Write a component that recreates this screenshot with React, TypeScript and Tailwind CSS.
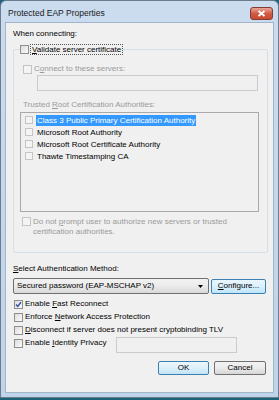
import React from 'react';

function Box({ checked = false, disabled = false, size = 9 }: { checked?: boolean; disabled?: boolean; size?: number }) {
  return (
    <span
      className={`flex shrink-0 items-center justify-center border ${disabled ? 'border-[#c4c4c4] bg-[#f4f4f4]' : 'border-[#8e8f8f] bg-linear-to-br from-[#dcdcdc] to-[#fbfbfb]'}`}
      style={{ width: size, height: size }}
    >
      {checked && (
        <svg width="7" height="7" viewBox="0 0 7 7">
          <path d="M1 3.6 L2.8 5.5 L6 1.2" stroke="#2a4f9a" strokeWidth="1.4" fill="none" />
        </svg>
      )}
    </span>
  );
}

function U({ children }: { children: React.ReactNode }) {
  return <span className="underline underline-offset-[1px]">{children}</span>;
}

function CheckRow({ label, checked = false, className = '' }: { label: React.ReactNode; checked?: boolean; className?: string }) {
  return (
    <div className={`flex h-[10px] items-center ${className}`}>
      <span className="ml-[1px]">
        <Box checked={checked} />
      </span>
      <span className="ml-[2px] whitespace-nowrap">{label}</span>
    </div>
  );
}

export default function App() {
  const cas = [
    'Class 3 Public Primary Certification Authority',
    'Microsoft Root Authority',
    'Microsoft Root Certificate Authority',
    'Thawte Timestamping CA',
  ];

  return (
    <div className="h-[400px] w-[279px] bg-[#1b6378] font-['Liberation_Sans',Arial,sans-serif] text-[8px] leading-[10px] text-black">
      <div className="flex h-[398px] flex-col rounded-t-[6px] border border-[#6d7b8d] bg-linear-to-b from-[#cbdcef] via-[#c4d7ed] to-[#bfd3ea]">
        {/* title bar */}
        <div className="flex h-[21px] shrink-0 justify-between">
          <span className="ml-[7px] mt-[7px] text-[8.5px] text-[#1a1a1a]">Protected EAP Properties</span>
          <span className="mr-[5px] mt-[6px] flex h-[13px] w-[23px] items-center justify-center rounded-[3px] border border-[#843b30] bg-linear-to-b from-[#e9a597] via-[#d25b45] to-[#c84a2f]">
            <svg width="9" height="7" viewBox="0 0 9 7">
              <path d="M1.5 1 L7.5 6 M7.5 1 L1.5 6" stroke="#ffffff" strokeWidth="1.8" />
            </svg>
          </span>
        </div>

        {/* client area */}
        <div className="mx-[4px] mb-[4px] flex flex-1 flex-col border border-[#a3b5c9] bg-[#f0f0f0] pl-[7px] pr-[5px]">
          <div className="mt-[6px]">When connecting:</div>

          <fieldset className="mt-[5px] h-[209px] border border-[#d5dfe5] rounded-[2px]">
            <legend className="ml-[6px] flex h-[11px] items-center">
              <Box />
              <span className="ml-[1px] border border-dotted border-[#555] px-[1px] leading-[9px]">
                <U>V</U>alidate server certificate
              </span>
            </legend>

            <div className="ml-[9px] mt-[9px] flex h-[10px] items-center text-[#9a9a9a]">
              <Box disabled />
              <span className="ml-[2px]">C<U>o</U>nnect to these servers:</span>
            </div>
            <div className="ml-[23px] mt-[1px] h-[16px] w-[221px] border border-[#c9cbcf] bg-[#f0f0f0]" />

            <div className="ml-[9px] mt-[9px] text-[#9a9a9a]">
              Trusted <U>R</U>oot Certification Authorities:
            </div>
            <div className="ml-[6px] mt-[2px] h-[100px] w-[239px] border border-[#a9a9a9] bg-[#f0f0f0] pt-[1px]">
              {cas.map((c, i) => (
                <div key={c} className="flex h-[12px] items-center pl-[4px]">
                  <Box disabled size={8} />
                  <span className={`ml-[3px] px-[1px] leading-[11px] ${i === 0 ? 'bg-[#3399ff] text-white' : ''}`}>{c}</span>
                </div>
              ))}
            </div>

            <div className="ml-[8px] mt-[5px] flex items-start text-[#9a9a9a]">
              <Box disabled />
              <span className="ml-[2px]">
                Do not <U>p</U>rompt user to authorize new servers or trusted
                <br />
                certification authorities.
              </span>
            </div>
          </fieldset>

          <div className="mt-[11px]">
            <U>S</U>elect Authentication Method:
          </div>

          <div className="mt-[4px] flex items-center">
            <div className="flex h-[16px] w-[196px] items-center justify-between rounded-[2px] border border-[#707070] bg-linear-to-b from-[#f2f2f2] via-[#ebebeb] to-[#d9d9d9] pl-[3px] pr-[5px]">
              <span>Secured password (EAP-MSCHAP v2)</span>
              <svg width="5" height="3" viewBox="0 0 5 3">
                <path d="M0 0 H5 L2.5 3 Z" fill="#000" />
              </svg>
            </div>
            <div className="ml-[2px] flex h-[15px] w-[55px] items-center justify-center rounded-[2px] border border-[#3c7fb1] bg-linear-to-b from-[#eaf6fd] via-[#d9f0fc] to-[#bee6fd]">
              <span>
                <U>C</U>onfigure...
              </span>
            </div>
          </div>

          <CheckRow className="mt-[5px]" checked label={<>Enable <U>F</U>ast Reconnect</>} />
          <CheckRow className="mt-[3px]" label={<>Enforce <U>N</U>etwork Access Protection</>} />
          <CheckRow className="mt-[3px]" label={<><U>D</U>isconnect if server does not present cryptobinding TLV</>} />

          <div className="mt-[2px] flex items-start">
            <CheckRow className="mt-[1px] w-[103px]" label={<>Enable <U>I</U>dentity Privacy</>} />
            <div className="h-[16px] w-[121px] border border-[#c9cbcf] bg-[#f0f0f0]" />
          </div>

          <div className="mr-[2px] mt-[8px] flex justify-end gap-[5px]">
            <div className="flex h-[14px] w-[51px] items-center justify-center rounded-[2px] border border-[#3c7fb1] bg-linear-to-b from-[#eef8fd] via-[#dcf0fb] to-[#c2e4f6]">
              OK
            </div>
            <div className="flex h-[14px] w-[52px] items-center justify-center rounded-[2px] border border-[#707070] bg-linear-to-b from-[#f2f2f2] via-[#ebebeb] to-[#d6d6d6]">
              Cancel
            </div>
          </div>
        </div>
      </div>
    </div>
  );
}
